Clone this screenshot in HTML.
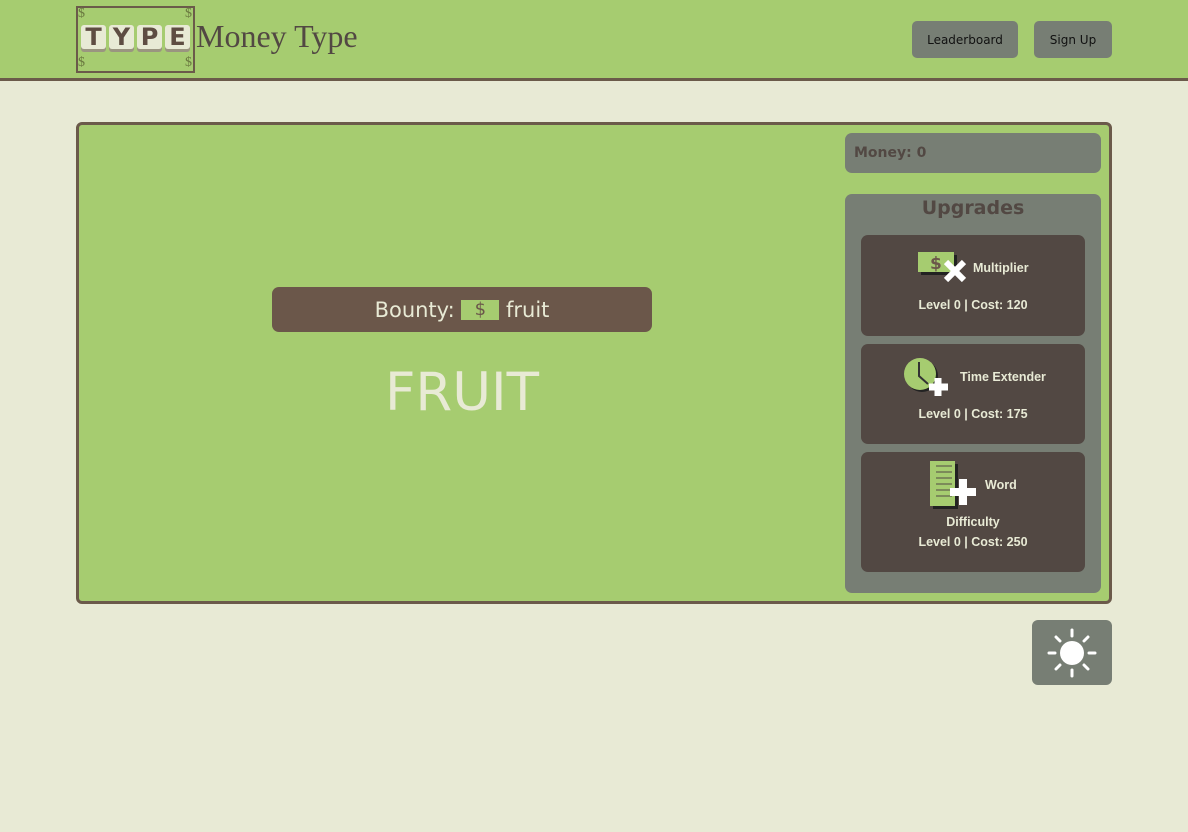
<!DOCTYPE html><html><head><style>
*{margin:0;padding:0;box-sizing:border-box}
body{width:1188px;height:832px;background:#e8ead5;font-family:"DejaVu Sans","Liberation Sans",sans-serif;position:relative;overflow:hidden}
.a{position:absolute}
.hdr{left:0;top:0;width:1188px;height:81px;background:#a6cc70;border-bottom:3px solid #6b5a4a}
.btn{background:#777e74;border-radius:5px;font-size:12px;color:#111;display:flex;align-items:center;justify-content:center}
.main{left:76px;top:122px;width:1036px;height:482px;background:#a6cc70;border:3px solid #6b5a4a;border-radius:6px}
.card{left:861px;width:224px;background:#524843;border-radius:7px;color:#e8ead5;font-size:12.5px;font-weight:bold;text-align:center;font-family:"Liberation Sans",sans-serif}
.tile{display:inline-block;width:25px;height:24px;background:#e8ead5;border-radius:3px;box-shadow:0 3px 0 #9a9580;color:#5e4d42;font:900 24px/24px "DejaVu Sans",sans-serif;text-align:center;margin-right:3px;vertical-align:top}
.d{position:absolute;color:#6b7a40;font-size:14px;font-family:'Liberation Serif',serif}
</style></head><body>
<div class="a hdr"></div>
<div class="a" style="left:76px;top:6px;width:119px;height:67px;border:2px solid #6b5a4a"></div>
<div class="d" style="left:78px;top:6px">$</div>
<div class="d" style="left:185px;top:6px">$</div>
<div class="d" style="left:78px;top:55px">$</div>
<div class="d" style="left:185px;top:55px">$</div>
<div class="a" style="left:81px;top:25px;white-space:nowrap"><span class="tile">T</span><span class="tile">Y</span><span class="tile">P</span><span class="tile">E</span></div>
<div class="a" style="left:196px;top:18px;font-family:'Liberation Serif',serif;font-size:32px;color:#524843">Money Type</div>
<div class="a btn" style="left:912px;top:21px;width:106px;height:37px">Leaderboard</div>
<div class="a btn" style="left:1034px;top:21px;width:78px;height:37px">Sign Up</div>
<div class="a main"></div>
<div class="a" style="left:272px;top:287px;width:380px;height:45px;background:#6b574a;border-radius:7px;color:#e8ead5;font-size:21px;display:flex;align-items:center;justify-content:center">Bounty:&nbsp;<span style="display:inline-block;width:38px;height:20px;background:#a6cc70;color:#6b574a;font-size:18px;line-height:20px;text-align:center">$</span>&nbsp;fruit</div>
<div class="a" style="left:262px;top:362px;width:400px;text-align:center;color:#e8ead5;font-size:53px">FRUIT</div>
<div class="a" style="left:845px;top:133px;width:256px;height:40px;background:#777e74;border-radius:7px;color:#524843;font-weight:bold;font-size:14px;line-height:40px;padding-left:9px">Money: 0</div>
<div class="a" style="left:845px;top:194px;width:256px;height:399px;background:#777e74;border-radius:7px;color:#524843;font-weight:bold;font-size:19px;text-align:center;padding-top:3px">Upgrades</div>
<div class="a card" style="top:235px;height:101px">
<svg class="a" style="left:57px;top:17px" width="50" height="30"><rect x="3" y="3" width="36" height="20" fill="#222"/><rect x="0" y="0" width="36" height="20" fill="#a6cc70"/><text x="12" y="17" font-size="17" fill="#6b574a" font-family="DejaVu Sans">$</text><path d="M28 10 L46 28 M46 10 L28 28" stroke="#fff" stroke-width="6"/></svg>
<div class="a" style="left:112px;top:26px">Multiplier</div>
<div class="a" style="left:0;top:63px;width:224px">Level 0 | Cost: 120</div></div>
<div class="a card" style="top:344px;height:100px">
<svg class="a" style="left:43px;top:12px" width="50" height="42"><circle cx="18" cy="20" r="16" fill="#222"/><circle cx="16" cy="18" r="16" fill="#a6cc70"/><path d="M15 6 V20 L24 28" stroke="#333" stroke-width="2" fill="none"/><path d="M34 22 V40 M25 31 H44" stroke="#fff" stroke-width="7"/></svg>
<div class="a" style="left:99px;top:26px">Time Extender</div>
<div class="a" style="left:0;top:63px;width:224px">Level 0 | Cost: 175</div></div>
<div class="a card" style="top:452px;height:120px">
<svg class="a" style="left:69px;top:9px" width="50" height="50"><rect x="3" y="3" width="25" height="45" fill="#222"/><rect x="0" y="0" width="25" height="45" fill="#a6cc70"/><g stroke="#524843" stroke-width="1"><path d="M6 5H22M6 11H22M6 17H22M6 23H22M6 29H22M6 35H22"/></g><path d="M33 18 V44 M20 31 H46" stroke="#fff" stroke-width="8"/></svg>
<div class="a" style="left:124px;top:26px">Word</div>
<div class="a" style="left:0;top:63px;width:224px">Difficulty</div>
<div class="a" style="left:0;top:83px;width:224px">Level 0 | Cost: 250</div></div>
<div class="a" style="left:1032px;top:620px;width:80px;height:65px;background:#777e74;border-radius:6px"></div>
<svg class="a" style="left:1046px;top:627px" width="52" height="52"><circle cx="26" cy="26" r="12" fill="#fff"/><g stroke="#fff" stroke-width="3" stroke-linecap="round"><path d="M26 3v6M26 43v6M3 26h6M43 26h6M10 10l4 4M38 38l4 4M42 10l-4 4M10 42l4-4"/></g></svg>
</body></html>
